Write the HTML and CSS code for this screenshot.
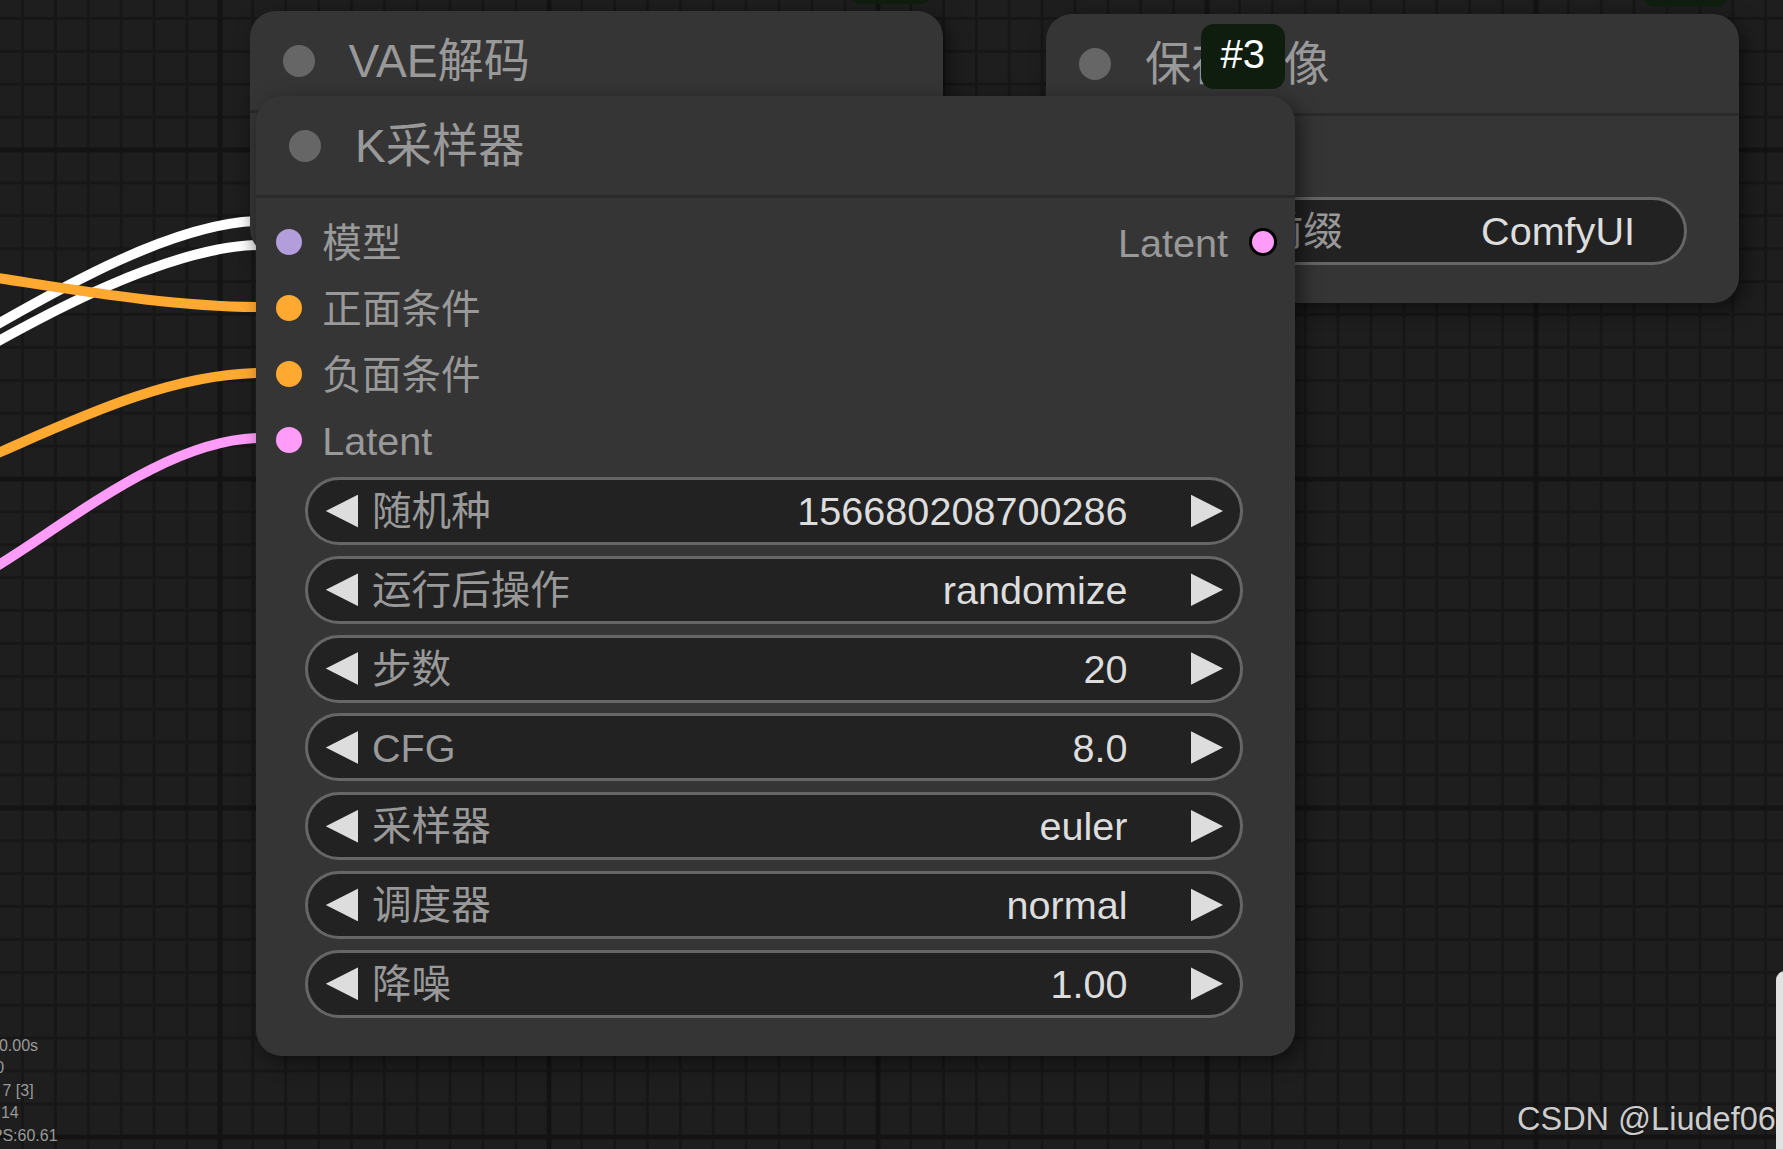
FILE: index.html
```html
<!DOCTYPE html>
<html lang="zh-CN">
<head>
<meta charset="utf-8">
<title>ComfyUI</title>
<link rel="stylesheet" href="styles.css">
</head>
<body>
<div class="canvas">
  <svg class="wires" width="1783" height="1149" viewBox="0 0 1783 1149">
    <path class="wire w-white" d="M -30 340 C 40 300, 170 221, 262 221"/>
    <path class="wire w-white" d="M -30 357 C 40 317, 170 245, 262 245"/>
    <path class="wire w-orange" d="M -30 274 C 50 285, 160 307, 262 307"/>
    <path class="wire w-orange" d="M -30 465 C 50 432, 160 373, 262 373"/>
    <path class="wire w-pink" d="M -30 582 C 50 539, 160 438, 262 438"/>
  </svg>

  <div class="node node-vae">
    <div class="badge badge-empty"></div>
    <div class="title"><span class="title-dot"></span><span class="title-text">VAE解码</span></div>
    <div class="body"></div>
  </div>

  <div class="node node-save">
    <div class="badge badge-empty"></div>
    <div class="title"><span class="title-dot"></span><span class="title-text">保存图像</span></div>
    <div class="body">
      <div class="slots">
        <div class="slot-col">
          <div class="slot"><span class="dot dot-image"></span><span class="slot-label">图像</span></div>
        </div>
      </div>
      <div class="widgets">
        <div class="widget widget-text"><span class="wlabel">文件名前缀</span><span class="wvalue">ComfyUI</span></div>
      </div>
    </div>
  </div>

  <div class="node node-ks">
    <div class="badge">#3</div>
    <div class="title"><span class="title-dot"></span><span class="title-text">K采样器</span></div>
    <div class="body">
      <div class="slots">
        <div class="slot-col">
          <div class="slot"><span class="dot dot-model"></span><span class="slot-label">模型</span></div>
          <div class="slot"><span class="dot dot-cond"></span><span class="slot-label">正面条件</span></div>
          <div class="slot"><span class="dot dot-cond"></span><span class="slot-label">负面条件</span></div>
          <div class="slot"><span class="dot dot-latent"></span><span class="slot-label">Latent</span></div>
        </div>
        <div class="slot-col slot-col-out">
          <div class="slot slot-out"><span class="slot-label">Latent</span><span class="dot dot-latent dot-out"></span></div>
        </div>
      </div>
      <div class="widgets">
        <div class="widget"><span class="arrow arrow-l"></span><span class="wlabel">随机种</span><span class="wvalue">156680208700286</span><span class="arrow arrow-r"></span></div>
        <div class="widget"><span class="arrow arrow-l"></span><span class="wlabel">运行后操作</span><span class="wvalue">randomize</span><span class="arrow arrow-r"></span></div>
        <div class="widget"><span class="arrow arrow-l"></span><span class="wlabel">步数</span><span class="wvalue">20</span><span class="arrow arrow-r"></span></div>
        <div class="widget"><span class="arrow arrow-l"></span><span class="wlabel">CFG</span><span class="wvalue">8.0</span><span class="arrow arrow-r"></span></div>
        <div class="widget"><span class="arrow arrow-l"></span><span class="wlabel">采样器</span><span class="wvalue">euler</span><span class="arrow arrow-r"></span></div>
        <div class="widget"><span class="arrow arrow-l"></span><span class="wlabel">调度器</span><span class="wvalue">normal</span><span class="arrow arrow-r"></span></div>
        <div class="widget"><span class="arrow arrow-l"></span><span class="wlabel">降噪</span><span class="wvalue">1.00</span><span class="arrow arrow-r"></span></div>
      </div>
    </div>
  </div>

  <div class="info">
    <div>T: 0.00s</div>
    <div>I: 0</div>
    <div>N: 7 [3]</div>
    <div>V: 14</div>
    <div>FPS:60.61</div>
  </div>

  <div class="watermark">CSDN @Liudef06</div>
  <div class="side-panel"></div>
</div>
</body>
</html>
```

FILE: styles.css
```css
* { box-sizing: border-box; }

html, body {
  margin: 0;
  padding: 0;
  background: #1e1e1e;
}

body {
  width: 1783px;
  height: 1149px;
  overflow: hidden;
  font-family: "Liberation Sans", "Noto Sans CJK SC", Arial, sans-serif;
}

.canvas {
  position: relative;
  width: 1783px;
  height: 1149px;
  overflow: hidden;
  background-color: #1e1e1e;
  background-image:
    linear-gradient(to right, #131313 5px, transparent 5px),
    linear-gradient(to bottom, #131313 5px, transparent 5px),
    linear-gradient(to right, #171717 3px, transparent 3px),
    linear-gradient(to bottom, #171717 3px, transparent 3px);
  background-size: 329px 100%, 100% 329px, 32.9px 100%, 100% 32.9px;
  background-position: 217.5px 0, 0 147.5px, 21px 0, 0 17px;
}

.wires {
  position: absolute;
  left: 0;
  top: 0;
}

.wire {
  fill: none;
  stroke-width: 10;
  stroke-linecap: round;
}
.w-white { stroke: #ffffff; }
.w-orange { stroke: #ffa931; }
.w-pink { stroke: #ff9cf9; }

/* nodes */
.node {
  position: absolute;
  background: #353535;
  border-radius: 26px;
  box-shadow: 6px 6px 20px rgba(0, 0, 0, 0.5);
  display: flex;
  flex-direction: column;
}

.node-vae { left: 249.5px; top: 11px; width: 693.5px; height: 244px; }
.node-save { left: 1046px; top: 14px; width: 693px; height: 289px; }
.node-ks { left: 256px; top: 96px; width: 1039px; height: 960px; }

.badge {
  position: absolute;
  right: 10px;
  bottom: calc(100% + 7px);
  height: 65px;
  padding: 0 20px 6px 20px;
  background: #0e1d0e;
  border-radius: 13px;
  color: #ffffff;
  font-size: 40px;
  line-height: 1;
  display: flex;
  align-items: center;
}

.badge-empty { width: 86px; }

.title {
  height: 102px;
  flex-shrink: 0;
  border-bottom: 3px solid #2a2a2a;
  display: flex;
  align-items: center;
  padding-left: 33px;
}

.title-dot {
  width: 32px;
  height: 32px;
  border-radius: 50%;
  background: #666666;
  margin-right: 34px;
  flex-shrink: 0;
}

.title-text {
  font-size: 46.2px;
  line-height: 1;
  color: #999999;
  white-space: nowrap;
  padding-top: 2px;
}

.body {
  padding-top: 11px;
  display: flex;
  flex-direction: column;
}

.slots {
  display: flex;
  justify-content: space-between;
}

.slot-col {
  display: flex;
  flex-direction: column;
}

.slot-col-out { align-items: flex-end; }

.slot {
  height: 66px;
  display: flex;
  align-items: center;
  gap: 20.3px;
  padding-left: 20px;
  font-size: 39.6px;
  color: #999999;
  white-space: nowrap;
}

.slot-out {
  padding-left: 0;
  padding-right: 18.5px;
  gap: 20.5px;
}

.slot-label {
  line-height: 1;
  padding-top: 4px;
}

.dot {
  width: 26px;
  height: 26px;
  border-radius: 50%;
  flex-shrink: 0;
}

.dot-model { background: #b39ddb; }
.dot-cond { background: #ffa931; }
.dot-latent { background: #ff9cf9; }
.dot-image { background: #64b5f6; }

.dot-out {
  width: 28px;
  height: 28px;
  border: 3px solid #000000;
}

/* widgets */
.widgets {
  margin-top: 4px;
  padding: 0 52px 0 49px;
  display: flex;
  flex-direction: column;
  gap: 10.8px;
}

.node-save .widgets { padding: 0 52px 0 49.5px; }

.widget {
  height: 68px;
  border: 3px solid #666666;
  border-radius: 34px;
  background: #222222;
  display: flex;
  align-items: center;
  padding: 0 17px 0 17.8px;
  font-size: 39.6px;
  line-height: 1;
  white-space: nowrap;
}

.widget-text { padding: 0 49px 0 46.5px; }

.arrow {
  width: 32.5px;
  height: 33px;
  background: #dddddd;
  flex-shrink: 0;
}

.arrow-l { clip-path: polygon(100% 0, 0 50%, 100% 100%); }
.arrow-r { clip-path: polygon(0 0, 100% 50%, 0 100%); }

.wlabel {
  flex: 1;
  color: #999999;
  margin-left: 13.7px;
  padding-top: 2px;
}

.widget-text .wlabel { margin-left: 0; }

.wvalue {
  color: #dddddd;
  margin-right: 63px;
  padding-top: 2px;
}

.widget-text .wvalue { margin-right: 0; }

/* overlays */
.info {
  position: absolute;
  left: -18px;
  top: 1034.75px;
  font-size: 16px;
  line-height: 22.5px;
  color: #9a9a9a;
  white-space: nowrap;
}

.watermark {
  position: absolute;
  left: 1517px;
  top: 1099px;
  font-size: 32.5px;
  line-height: 40px;
  color: #cdcdcd;
  white-space: nowrap;
  text-shadow: 0 0 2px rgba(0, 0, 0, 0.6);
}

.side-panel {
  position: absolute;
  left: 1776px;
  top: 971px;
  width: 30px;
  height: 200px;
  background: #e2e2e2;
  border-radius: 9px 0 0 0;
}
```
